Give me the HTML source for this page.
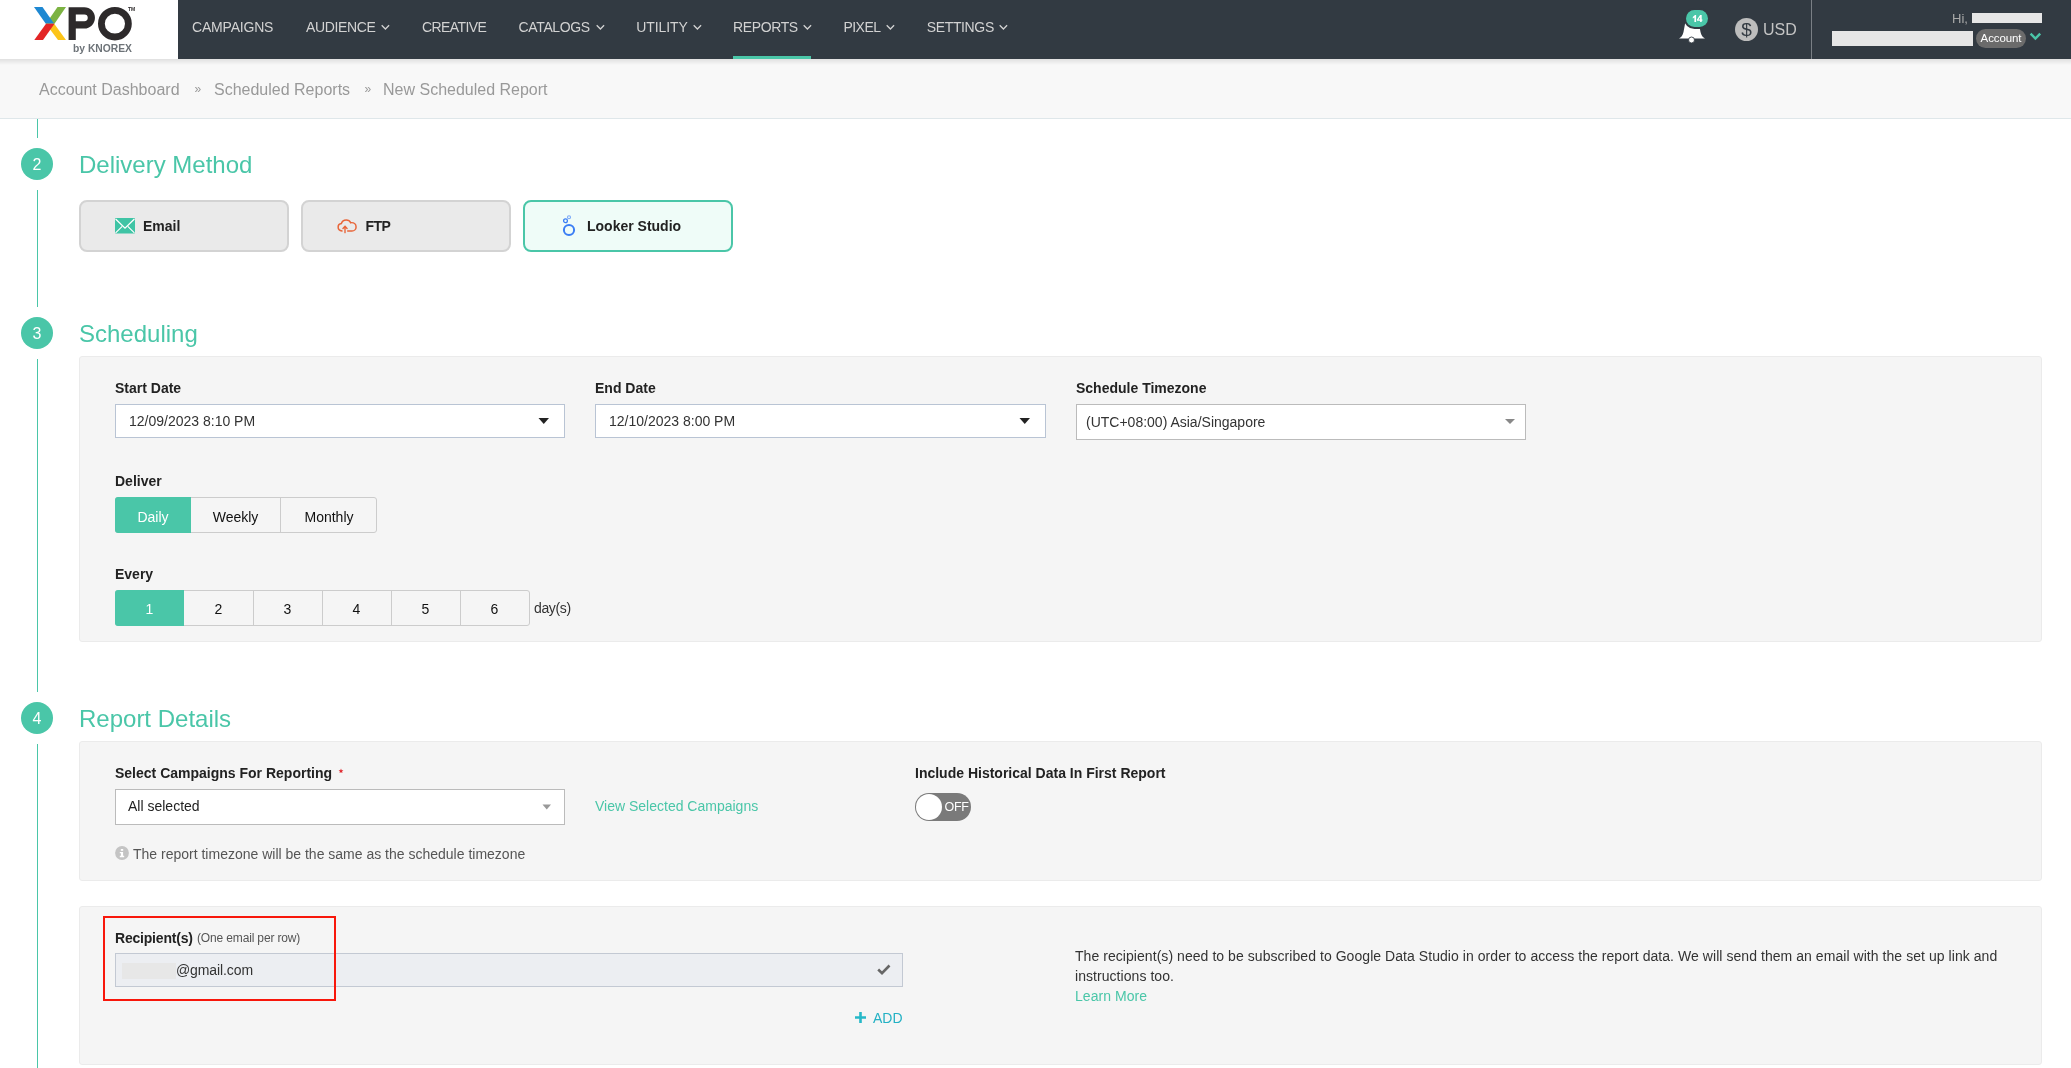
<!DOCTYPE html>
<html><head><meta charset="utf-8">
<style>
*{box-sizing:border-box;margin:0;padding:0}
html,body{-webkit-font-smoothing:antialiased;width:2071px;height:1068px;overflow:hidden;background:#fff;font-family:"Liberation Sans",sans-serif;color:#333}
.a{position:absolute}
.t{position:absolute;line-height:1;white-space:nowrap}
#hdr{position:absolute;left:0;top:0;width:2071px;height:59px;background:#323a42}
#logo{position:absolute;left:0;top:0;width:178px;height:59px;background:#fff}
.nav{position:absolute;top:20px;font-size:14px;color:#d2d2d2;line-height:1;white-space:nowrap}
.chev{display:inline-block;width:6px;height:6px;border-right:1.5px solid #d2d2d2;border-bottom:1.5px solid #d2d2d2;transform:rotate(45deg);margin-left:6px;position:relative;top:-3px}
#shadow{position:absolute;left:0;top:59px;width:2071px;height:6px;background:linear-gradient(#e0e0e0,rgba(248,248,248,0))}
#bc{position:absolute;left:0;top:59px;width:2071px;height:60px;background:#f8f8f8;border-bottom:1px solid #dfe7ea}
.bct{position:absolute;top:82px;font-size:16px;color:#999;line-height:1;white-space:nowrap}
.vline{position:absolute;left:37px;width:1.2px;background:#4ac6a8}
.circ{position:absolute;left:21px;width:32px;height:32px;border-radius:50%;background:#4ac6a8;color:#fff;font-size:16px;text-align:center;line-height:34px}
.h2{position:absolute;left:79px;font-size:24px;color:#4ac6a8;line-height:1;white-space:nowrap}
.dm{position:absolute;top:200px;width:210px;height:52px;border:2px solid #d3d3d3;border-radius:8px;background:#eaeaea}
.dml{position:absolute;top:219px;font-size:14px;font-weight:700;color:#222;line-height:1;white-space:nowrap}
.panel{position:absolute;left:79px;width:1963px;background:#f5f5f5;border:1px solid #ebebeb;border-radius:3px}
.lbl{position:absolute;font-size:14px;font-weight:700;color:#222;line-height:1;white-space:nowrap}
.inp{position:absolute;background:#fff;border:1px solid #b9c4d4}
.it{position:absolute;font-size:14px;color:#333;line-height:1;white-space:nowrap}
.seg{position:absolute;border:1px solid #ccc;background:#f5f5f5}
.segt{position:absolute;font-size:14px;color:#111;line-height:1;white-space:nowrap;text-align:center}
</style></head><body><div id="root" style="position:absolute;left:0;top:0;width:2071px;height:1068px;will-change:transform">
<div id="hdr"></div>
<div id="logo">
<svg class="a" style="left:0;top:0" width="178" height="59" viewBox="0 0 178 59">
 <polygon points="57.5,7 66,7 54.5,23.7 46,23.7" fill="#7cb342"/>
 <polygon points="34,7 42.5,7 54.2,23.7 45.8,23.7" fill="#1e88d2"/>
 <polygon points="45.8,23.7 54.2,23.7 66,40 58,40" fill="#fcc419"/>
 <polygon points="46,23.7 54.5,23.7 43,40 34.3,40" fill="#e32526"/>
 <path d="M72.2,40 V10.8 H84.3 A7.05,7.05 0 0 1 84.3,24.9 H72.2" fill="none" stroke="#2d2a2b" stroke-width="7.2"/>
 <ellipse cx="114.9" cy="23.7" rx="13.5" ry="13.3" fill="none" stroke="#2d2a2b" stroke-width="6.8"/>
 <text x="128" y="11" font-family="Liberation Sans" font-size="5" font-weight="700" fill="#2d2a2b">TM</text>
 <text x="73" y="52" font-family="Liberation Sans" font-size="10.3" font-weight="700" fill="#6d7378">by KNOREX</text>
</svg>
</div>
<div class="nav" style="left:192px;letter-spacing:-0.19px">CAMPAIGNS</div>
<div class="nav" style="left:306px;letter-spacing:-0.36px">AUDIENCE</div>
<svg class="a" style="left:381px;top:24px" width="9" height="7" viewBox="0 0 9 7"><path d="M0.7,1.2 L4.4,5 L8.1,1.2" fill="none" stroke="#d2d2d2" stroke-width="1.3"/></svg>
<div class="nav" style="left:422px;letter-spacing:-0.6px">CREATIVE</div>
<div class="nav" style="left:518.6px;letter-spacing:-0.37px">CATALOGS</div>
<svg class="a" style="left:595.8px;top:24px" width="9" height="7" viewBox="0 0 9 7"><path d="M0.7,1.2 L4.4,5 L8.1,1.2" fill="none" stroke="#d2d2d2" stroke-width="1.3"/></svg>
<div class="nav" style="left:636.3px;letter-spacing:-0.1px">UTILITY</div>
<svg class="a" style="left:692.6px;top:24px" width="9" height="7" viewBox="0 0 9 7"><path d="M0.7,1.2 L4.4,5 L8.1,1.2" fill="none" stroke="#d2d2d2" stroke-width="1.3"/></svg>
<div class="nav" style="left:733px;letter-spacing:-0.38px">REPORTS</div>
<svg class="a" style="left:802.8px;top:24px" width="9" height="7" viewBox="0 0 9 7"><path d="M0.7,1.2 L4.4,5 L8.1,1.2" fill="none" stroke="#d2d2d2" stroke-width="1.3"/></svg>
<div class="nav" style="left:843.4px;letter-spacing:-0.5px">PIXEL</div>
<svg class="a" style="left:886px;top:24px" width="9" height="7" viewBox="0 0 9 7"><path d="M0.7,1.2 L4.4,5 L8.1,1.2" fill="none" stroke="#d2d2d2" stroke-width="1.3"/></svg>
<div class="nav" style="left:926.8px;letter-spacing:-0.37px">SETTINGS</div>
<svg class="a" style="left:999.3px;top:24px" width="9" height="7" viewBox="0 0 9 7"><path d="M0.7,1.2 L4.4,5 L8.1,1.2" fill="none" stroke="#d2d2d2" stroke-width="1.3"/></svg>
<div class="a" style="left:733px;top:56px;width:78px;height:3px;background:#4ac6a8"></div>


<!-- header right -->
<svg class="a" style="left:1676px;top:8px" width="36" height="38" viewBox="0 0 36 38">
 <path d="M3,30.6 C5,29.5 6.8,27.5 7.5,24 L9,16 C10,12 13,10.5 16,10.5 C19,10.5 22,12 23,16 L24.5,24 C25.2,27.5 27,29.5 29,30.6 Z" fill="#fff"/>
 <circle cx="15.5" cy="32" r="3" fill="#fff" stroke="#323a42" stroke-width="0.9"/>
 <rect x="8" y="0" width="26" height="21" rx="10.5" fill="#323a42"/>
 <rect x="10" y="2" width="22" height="17" rx="8.5" fill="#4ac6a8"/>
 <path d="M16.8,9 L19,7.1 H20.1 V14 H18.4 V9.5 L16.8,10.5 Z" fill="#fff"/><path fill-rule="evenodd" d="M24.1,7.1 H25.7 V11.5 H26.4 V12.8 H25.7 V14 H24.1 V12.8 H21 V11.4 Z M24.1,9.3 L22.5,11.5 H24.1 Z" fill="#fff"/>
</svg>
<div class="a" style="left:1735px;top:18px;width:23px;height:23px;border-radius:50%;background:#bdbdbd"></div>
<div class="t" style="left:1740px;top:18px;font-size:19px;color:#323a42;width:13px;text-align:center;line-height:23px">$</div>
<div class="t" style="left:1763px;top:22px;font-size:16px;color:#c4c4c4">USD</div>
<div class="a" style="left:1811px;top:0;width:1px;height:59px;background:#7a7f85"></div>
<div class="t" style="left:1952px;top:12px;font-size:13px;color:#a8a8a8">Hi,</div>
<div class="a" style="left:1972px;top:13px;width:70px;height:10px;background:#e6e6e6"></div>
<div class="a" style="left:1832px;top:31px;width:141px;height:15px;background:#e6e6e6"></div>
<div class="a" style="left:1976px;top:29px;width:50px;height:19px;border-radius:10px;background:#6b6b6b"></div>
<div class="t" style="left:1980px;top:32px;font-size:11.5px;color:#fff;width:42px;text-align:center;line-height:13px;letter-spacing:-0.1px">Account</div>
<svg class="a" style="left:2029px;top:32px" width="14" height="10" viewBox="0 0 14 10"><path d="M1.6,1.6 L6.4,6.6 L11.2,1.6" fill="none" stroke="#4ac6a8" stroke-width="2.4"/></svg>

<div id="bc"></div>
<div id="shadow"></div>
<div class="bct" style="left:39px">Account Dashboard</div>
<div class="bct" style="left:194.5px;font-size:12px;top:83px">»</div>
<div class="bct" style="left:214px">Scheduled Reports</div>
<div class="bct" style="left:364.5px;font-size:12px;top:83px">»</div>
<div class="bct" style="left:383px">New Scheduled Report</div>

<!-- timeline -->
<div class="vline" style="top:119px;height:19px"></div>
<div class="circ" style="top:148px">2</div>
<div class="vline" style="top:190px;height:117px"></div>
<div class="circ" style="top:317px">3</div>
<div class="vline" style="top:359px;height:333px"></div>
<div class="circ" style="top:702px">4</div>
<div class="vline" style="top:744px;height:330px"></div>

<div class="h2" style="top:153px">Delivery Method</div>
<div class="dm" style="left:79px"></div>
<div class="dm" style="left:301px"></div>
<div class="dm" style="left:523px;border-color:#4ac6a8;background:#effcf8"></div>
<div class="dml" style="left:143px">Email</div>
<div class="dml" style="left:365.5px;letter-spacing:-0.6px">FTP</div>
<div class="dml" style="left:587px">Looker Studio</div>


<!-- delivery icons -->
<svg class="a" style="left:115px;top:218px" width="20" height="16" viewBox="0 0 20 16">
 <rect x="0" y="0" width="20" height="15.5" rx="1" fill="#3fc4a5"/>
 <path d="M0.6,1 L10,10.2 L19.4,1" fill="none" stroke="#fff" stroke-width="1.25"/>
 <path d="M0.6,14.8 L7.2,8.4 M19.4,14.8 L12.8,8.4" fill="none" stroke="#fff" stroke-width="1.15"/>
</svg>
<svg class="a" style="left:336px;top:218px" width="22" height="16" viewBox="0 0 22 16">
 <g transform="translate(1.1,0.9) scale(0.93)"><path d="M5.3,13 C2.9,12.8 1.1,11 1.1,8.8 C1.1,6.8 2.6,5.2 4.6,5 C5.3,2.6 7.3,1.1 9.8,1.1 C12,1.1 13.8,2.3 14.6,4.1 C14.9,4 15.3,4 15.6,4 C18.3,4 20.4,6.1 20.4,8.6 C20.4,11.1 18.5,13 16,13 H11.4" fill="none" stroke="#e8663a" stroke-width="1.6" stroke-linecap="round"/>
 <path d="M8.5,14.8 V8.2 M6.3,10.3 L8.5,8 L10.7,10.3" fill="none" stroke="#e8663a" stroke-width="1.5" stroke-linecap="round"/></g>
</svg>
<svg class="a" style="left:561px;top:214px" width="18" height="24" viewBox="0 0 18 24">
 <circle cx="8" cy="16" r="5.1" fill="none" stroke="#3b7ef4" stroke-width="2"/>
 <circle cx="4.5" cy="6.7" r="1.9" fill="none" stroke="#3b7ef4" stroke-width="1.3"/>
 <circle cx="8" cy="3.2" r="1.5" fill="none" stroke="#7aa7f7" stroke-width="1.1"/>
</svg>
<div class="h2" style="top:322px">Scheduling</div>
<div class="panel" style="top:356px;height:286px"></div>
<div class="lbl" style="left:115px;top:381px">Start Date</div>
<div class="lbl" style="left:595px;top:381px">End Date</div>
<div class="lbl" style="left:1076px;top:381px">Schedule Timezone</div>
<div class="inp" style="left:115px;top:404px;width:450px;height:34px"></div>
<div class="inp" style="left:595px;top:404px;width:451px;height:34px"></div>
<div class="inp" style="left:1076px;top:404px;width:450px;height:36px;border-color:#bbb"></div>
<div class="it" style="left:129px;top:414px">12/09/2023 8:10 PM</div>
<div class="it" style="left:609px;top:414px">12/10/2023 8:00 PM</div>
<div class="it" style="left:1086px;top:415px">(UTC+08:00) Asia/Singapore</div>

<div class="lbl" style="left:115px;top:474px">Deliver</div>
<div class="lbl" style="left:115px;top:567px">Every</div>


<svg class="a" style="left:538px;top:417px" width="12" height="8"><path d="M0.5,1 H11 L5.75,7 Z" fill="#222"/></svg>
<svg class="a" style="left:1018.5px;top:417px" width="12" height="8"><path d="M0.5,1 H11 L5.75,7 Z" fill="#222"/></svg>
<svg class="a" style="left:1504px;top:418px" width="12" height="8"><path d="M1,1 H11 L6,6 Z" fill="#888"/></svg>
<!-- deliver seg -->
<div class="a" style="left:115px;top:497px;width:262px;height:36px;border:1px solid #ccc;border-radius:3px;background:#f5f5f5"></div>
<div class="a" style="left:115px;top:497px;width:76px;height:36px;border-radius:3px 0 0 3px;background:#4ac6a8"></div>
<div class="a" style="left:280px;top:497px;width:1px;height:36px;background:#ccc"></div>
<div class="segt" style="left:115px;top:510px;width:76px;color:#fff">Daily</div>
<div class="segt" style="left:191px;top:510px;width:89px">Weekly</div>
<div class="segt" style="left:281px;top:510px;width:96px">Monthly</div>
<!-- every seg -->
<div class="a" style="left:115px;top:590px;width:415px;height:36px;border:1px solid #ccc;border-radius:3px;background:#f5f5f5"></div>
<div class="a" style="left:115px;top:590px;width:69px;height:36px;border-radius:3px 0 0 3px;background:#4ac6a8"></div>
<div class="a" style="left:253px;top:590px;width:1px;height:36px;background:#ccc"></div>
<div class="a" style="left:322px;top:590px;width:1px;height:36px;background:#ccc"></div>
<div class="a" style="left:391px;top:590px;width:1px;height:36px;background:#ccc"></div>
<div class="a" style="left:460px;top:590px;width:1px;height:36px;background:#ccc"></div>
<div class="segt" style="left:115px;top:602px;width:69px;color:#fff">1</div>
<div class="segt" style="left:184px;top:602px;width:69px">2</div>
<div class="segt" style="left:253px;top:602px;width:69px">3</div>
<div class="segt" style="left:322px;top:602px;width:69px">4</div>
<div class="segt" style="left:391px;top:602px;width:69px">5</div>
<div class="segt" style="left:460px;top:602px;width:69px">6</div>
<div class="it" style="left:534px;top:601px;letter-spacing:-0.35px">day(s)</div>
<div class="h2" style="top:706.5px">Report Details</div>
<div class="panel" style="top:741px;height:140px"></div>
<div class="lbl" style="left:115px;top:766px">Select Campaigns For Reporting</div>
<div class="lbl" style="left:915px;top:766px">Include Historical Data In First Report</div>
<div class="inp" style="left:115px;top:789px;width:450px;height:36px;border-color:#bbb"></div>
<div class="it" style="left:128px;top:799px;color:#222">All selected</div>
<div class="it" style="left:595px;top:799px;color:#4ac6a8">View Selected Campaigns</div>
<div class="it" style="left:133px;top:847px;color:#555">The report timezone will be the same as the schedule timezone</div>


<svg class="a" style="left:337.5px;top:768px" width="6" height="6" viewBox="0 0 8 8"><path d="M4,0.8 L4.9,3 L7.2,3.1 L5.4,4.5 L6,6.8 L4,5.5 L2,6.8 L2.6,4.5 L0.8,3.1 L3.1,3 Z" fill="#e0282e"/></svg>
<svg class="a" style="left:542px;top:804px" width="10" height="6"><path d="M0.5,0.5 H9 L4.75,5.5 Z" fill="#999"/></svg>
<div class="a" style="left:915px;top:793px;width:56px;height:28px;border-radius:14px;background:#7a7a7a"></div>
<div class="a" style="left:915.6px;top:793.6px;width:26.6px;height:26.6px;border-radius:50%;background:#fff"></div>
<div class="t" style="left:944.5px;top:800.5px;font-size:12.5px;color:#fff;letter-spacing:-0.3px">OFF</div>
<svg class="a" style="left:114px;top:845px" width="16" height="16" viewBox="0 0 16 16"><circle cx="8" cy="8" r="6.9" fill="#c4c4c4"/><rect x="6.8" y="4" width="2.4" height="1.8" fill="#fff"/><path d="M5.8,7 H9.1 V10.8 H10.2 V12.2 H5.8 V10.8 H6.9 V8.3 H5.8 Z" fill="#fff"/></svg>
<div class="panel" style="top:906px;height:159px"></div>
<div class="lbl" style="left:115px;top:930.5px;letter-spacing:-0.2px">Recipient(s)</div>
<div class="t" style="left:197px;top:932px;font-size:12px;color:#555;letter-spacing:-0.15px">(One email per row)</div>
<div class="inp" style="left:115px;top:953px;width:788px;height:34px;background:#eceef2;border-color:#c3c9d3"></div>
<div class="a" style="left:122px;top:963px;width:54px;height:16px;background:#e7e7e7"></div>
<div class="it" style="left:176px;top:963px;letter-spacing:-0.1px">@gmail.com</div>
<svg class="a" style="left:876px;top:963px" width="16" height="14" viewBox="0 0 16 14"><path d="M2.2,6.5 L6,10.2 L13.5,2.5" fill="none" stroke="#666" stroke-width="2.6"/></svg>
<svg class="a" style="left:854px;top:1011px" width="13" height="13" viewBox="0 0 13 13"><path d="M6.5,1 V12 M1,6.5 H12" stroke="#26b8c8" stroke-width="2.6"/></svg>
<div class="it" style="left:873px;top:1011px;color:#23b1c4">ADD</div>
<div class="a" style="left:1075px;top:946px;width:950px;font-size:14px;line-height:20px;color:#333;letter-spacing:0.055px">The recipient(s) need to be subscribed to Google Data Studio in order to access the report data. We will send them an email with the set up link and instructions too.<br><span style="color:#4ac6a8">Learn More</span></div>
<div class="a" style="left:103px;top:916px;width:233px;height:85px;border:2px solid #f8170b"></div>
</div></body></html>
